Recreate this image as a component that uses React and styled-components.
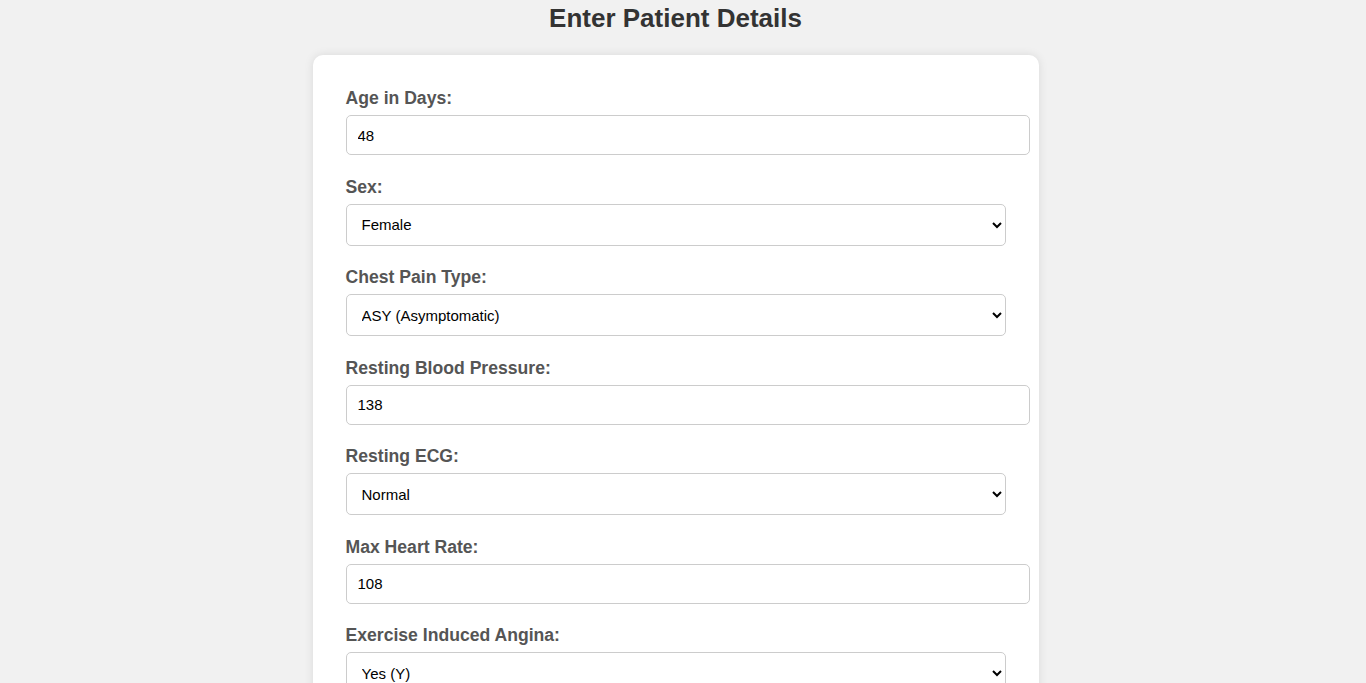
import React from "react";
import styled, { createGlobalStyle } from "styled-components";

const fields = [
  { label: "Age in Days:", value: "48" },
  { label: "Sex:", options: ["Female", "Male"] },
  {
    label: "Chest Pain Type:",
    options: [
      "ASY (Asymptomatic)",
      "ATA (Atypical Angina)",
      "NAP (Non-Anginal Pain)",
      "TA (Typical Angina)",
    ],
  },
  { label: "Resting Blood Pressure:", value: "138" },
  { label: "Resting ECG:", options: ["Normal", "ST", "LVH"] },
  { label: "Max Heart Rate:", value: "108" },
  { label: "Exercise Induced Angina:", options: ["Yes (Y)", "No (N)"] },
  { label: "Oldpeak:", value: "1.5" },
  { label: "ST Slope:", options: ["Flat", "Up", "Down"] },
];

const App = () => {
  return (
    <>
      <GlobalStyle />
      <Page>
        <Title>Enter Patient Details</Title>
        <FormCard onSubmit={(e) => e.preventDefault()}>
          {fields.map((f) => (
            <Group key={f.label}>
              <Label>{f.label}</Label>
              {f.options ? (
                <Select defaultValue={f.options[0]}>
                  {f.options.map((o) => (
                    <option key={o}>{o}</option>
                  ))}
                </Select>
              ) : (
                <Input type="text" defaultValue={f.value} />
              )}
            </Group>
          ))}
          <SubmitBtn type="submit">Predict</SubmitBtn>
        </FormCard>
      </Page>
    </>
  );
};

export default App;

const GlobalStyle = createGlobalStyle`
  body {
    margin: 0;
    background-color: #f1f1f1;
    font-family: "Liberation Sans", Arial, sans-serif;
  }
`;

// right padding keeps the centre where it sits beside a 15px scrollbar
const Page = styled.div`
  display: flex;
  flex-direction: column;
  align-items: center;
  padding: 3px 15px 40px 0;
`;

const Title = styled.h1`
  margin: 0 0 21px;
  font-size: 26px;
  font-weight: bold;
  color: #333;
`;

const FormCard = styled.form`
  display: flex;
  flex-direction: column;
  width: 660px;
  padding: 33px;
  background-color: #fff;
  border-radius: 10px;
  box-shadow: 0 0 10px rgba(0, 0, 0, 0.1);
`;

const Group = styled.div`
  display: flex;
  flex-direction: column;
  align-items: flex-start;
  margin-bottom: 21.5px;
`;

const Label = styled.label`
  font-size: 17.6px;
  font-weight: bold;
  color: #555;
  margin-bottom: 6px;
`;

const Input = styled.input`
  width: 100%;
  height: 18px;
  padding: 10px 11px;
  border: 1px solid #ccc;
  border-radius: 5px;
  font-family: "Liberation Sans", Arial, sans-serif;
  font-size: 15px;
  color: #000;
`;

const Select = styled.select`
  width: 100%;
  height: 42px;
  padding: 0 11px;
  border: 1px solid #ccc;
  border-radius: 5px;
  background-color: #fff;
  font-family: "Liberation Sans", Arial, sans-serif;
  font-size: 15px;
  color: #000;
`;

const SubmitBtn = styled.button`
  margin-top: 8px;
  padding: 12px;
  border: none;
  border-radius: 5px;
  background-color: #007bff;
  color: #fff;
  font-family: "Liberation Sans", Arial, sans-serif;
  font-size: 17px;
  cursor: pointer;
`;
